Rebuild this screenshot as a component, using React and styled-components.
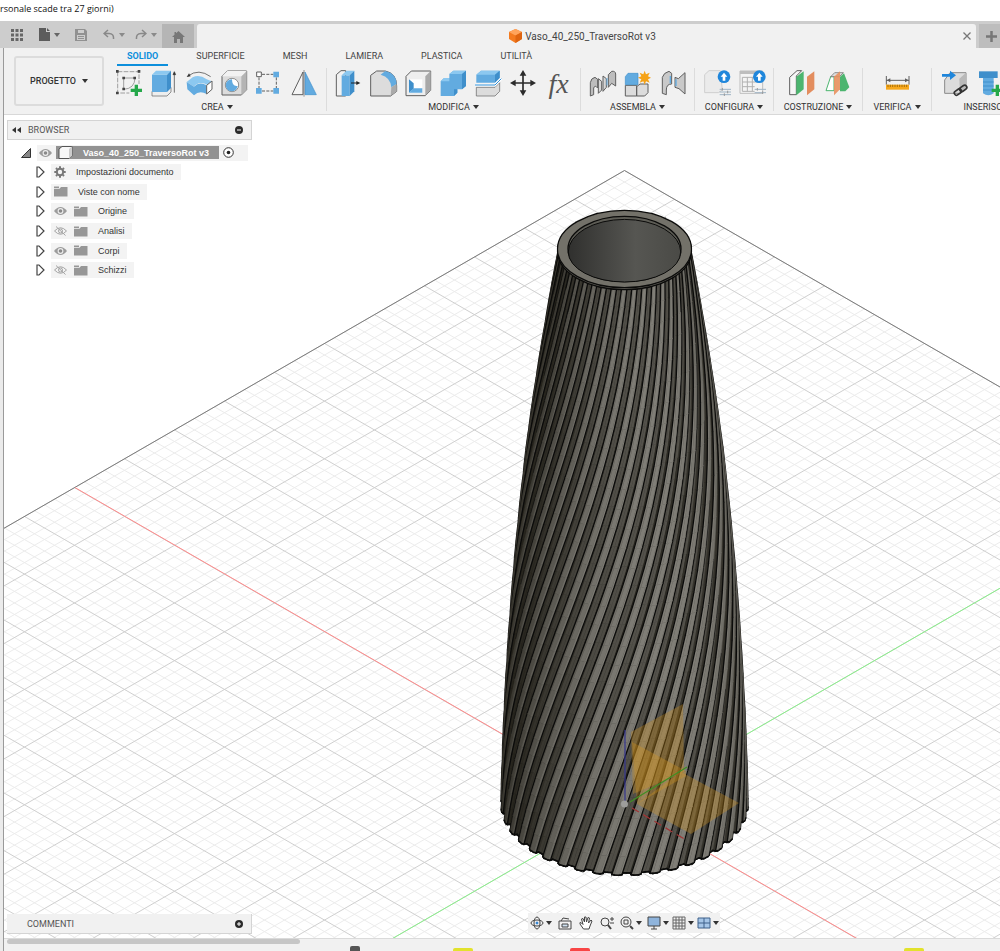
import React from 'react'
import styled, { createGlobalStyle } from 'styled-components'

/* ---------- vase geometry ---------- */

const CX = 624.5
const TOP = 249
const DROP = 555
const RIBS = 40
const PITCH = (Math.PI * 2) / RIBS
const STEPS = 30

const radius = (t) => 64.5 + 98 * t - 43 * t * t
const twist = (t) => -(1.1 * t + 1.2 * t * t - 0.667 * t * t * t)

// [angle offset as share of a pitch, height over the groove]
const PROFILE = [
  [-0.5, 0],
  [-0.3, 0],
  [-0.26, 2.8],
  [-0.13, 4],
  [0.13, 4],
  [0.26, 2.8],
  [0.3, 0],
  [0.5, 0],
]

const point = (rib, p, t) => {
  const [off, h] = PROFILE[p]
  const a = (rib + off) * PITCH + twist(t)
  const r = radius(t) + h * Math.min(1, 0.3 + t * 2)
  return {
    x: CX + r * Math.sin(a),
    y: TOP + DROP * t + r * Math.cos(a) * 0.577,
    d: r * Math.cos(a) * 0.816 + (1 - t) * 680 * 0.577,
    a,
    r,
  }
}

const xy = (q) => `${q.x.toFixed(1)} ${q.y.toFixed(1)}`

const buildVase = () => {
  const parts = []
  const outline = []
  for (let rib = 0; rib < RIBS; rib++) {
    for (let p = 0; p < PROFILE.length - 1; p++) {
      for (let s = 0; s < STEPS; s++) {
        const a = point(rib, p, s / STEPS)
        const b = point(rib, p + 1, s / STEPS)
        const c = point(rib, p + 1, (s + 1) / STEPS)
        const e = point(rib, p, (s + 1) / STEPS)
        const area = (c.x - a.x) * (e.y - b.y) - (c.y - a.y) * (e.x - b.x)
        if (area <= 0) continue
        const mid = (a.a + b.a) / 2
        const tilt = Math.atan2(a.r - b.r, a.r * (b.a - a.a))
        let v = 58 + 70 * Math.max(0, Math.cos(mid + tilt * 0.5 - 0.4))
        if (p === 0 || p === 6) v *= 0.66
        if (p === 1 || p === 5) v *= 0.4
        v = Math.round(v)
        const path = `M${xy(a)}L${xy(b)}L${xy(c)}L${xy(e)}Z`
        const d = a.d + b.d + c.d + e.d
        outline.push(path)
        parts.push({ d, path, fill: `rgb(${v},${v - 2},${v - 9})` })
        if (p === 2) parts.push({ d: d + 6, path: `M${xy(a)}L${xy(e)}`, w: 1.3 })
        if (p === 4) parts.push({ d: d + 6, path: `M${xy(b)}L${xy(c)}`, w: 1.3 })
        if (s === STEPS - 1) parts.push({ d: d + 6, path: `M${xy(c)}L${xy(e)}`, w: 1.6 })
      }
    }
  }
  parts.sort((m, n) => m.d - n.d)
  return { parts, outline: outline.join('') }
}

const VASE = buildVase()

/* ---------- ground grid ---------- */

const SLOPE = 0.5766
const APEX = 170.5

const gridLines = (major) => {
  const out = []
  for (let i = 0; i <= 110; i++) {
    if ((i % 5 === 0) !== major) continue
    const k = i * 10
    const y = APEX + k * SLOPE
    out.push(`M${CX - k} ${y}l1100 ${1100 * SLOPE}`)
    out.push(`M${CX + k} ${y}l-1100 ${1100 * SLOPE}`)
  }
  return out.join('')
}

function Scene() {
  return (
    <Canvas viewBox="4 115 996 823" preserveAspectRatio="xMidYMid slice" aria-hidden="true">
      <defs>
        <linearGradient id="inside" x1="0" x2="1">
          <stop offset="0" stopColor="#30302e" />
          <stop offset=".35" stopColor="#464643" />
          <stop offset=".6" stopColor="#565652" />
          <stop offset="1" stopColor="#4a4a46" />
        </linearGradient>
      </defs>
      <path d={gridLines(false)} stroke="#ececec" fill="none" />
      <path d={gridLines(true)} stroke="#cfcfcf" fill="none" />
      <path d={`M-100 ${APEX + (CX + 100) * SLOPE}L${CX} ${APEX}L1100 ${APEX + (1100 - CX) * SLOPE}`} stroke="#7d7d7d" fill="none" />
      <path d="M75 487.6L1055 1052.7" stroke="#ff8a8a" />
      <path d="M1174.5 487.6L194 1053" stroke="#8af08a" />

      <path d={VASE.outline} stroke="#0c0c0b" strokeWidth="1.6" fill="#222" />
      {VASE.parts.map((q, i) =>
        q.fill ? (
          <path key={i} d={q.path} fill={q.fill} stroke={q.fill} strokeWidth=".4" />
        ) : (
          <path key={i} d={q.path} stroke="#0b0b0a" strokeWidth={q.w} strokeLinecap="round" />
        )
      )}

      <ellipse cx={CX} cy="251" rx="67" ry="38.7" fill="#66645d" stroke="#0b0b0a" strokeWidth="1.2" />
      <ellipse cx={CX} cy="249" rx="67" ry="38.7" fill="#737169" stroke="#0b0b0a" strokeWidth="1.2" />
      <ellipse cx={CX} cy="249" rx="56.5" ry="32.7" fill="#5d5c55" stroke="#0b0b0a" strokeWidth="1.3" />
      <path d="M568.3 252a56.2 32.6 0 0 1 112.4 0a56.2 30 0 0 1-112.4 0z" fill="url(#inside)" stroke="#0b0b0a" />

      <g fill="#d8961c" fillOpacity=".32">
        <path d="M631 732L683 704L684 772L633 794Z" />
        <path d="M632 742L686 771L686 776L637 804Z" />
        <path d="M637 804L681 772L739 803L691 834Z" />
      </g>
      <path d="M625 730V801" stroke="#35358f" strokeWidth="1.2" />
      <path d="M630 802L687 767" stroke="#3f8f24" strokeWidth="1.4" />
      <path d="M632 808L686 840" stroke="#a03434" strokeWidth="1.2" strokeDasharray="8 5" />
      <circle cx="624.5" cy="804" r="3.5" fill="#9d9d9b" />
    </Canvas>
  )
}

/* ---------- tool icons, drawn on an 81 unit box ---------- */

const G = '#5f5f5f'
const B = '#62abe0'
const BL = '#8cc8f0'
const BD = '#3f8fcb'
const L = '#dcdcdc'

const ICONS = {
  sketch: (
    <>
      <path d="M5 5H69V42M5 5V69H40" fill="none" stroke="#777" strokeWidth="2" strokeDasharray="14 4" />
      <path d="M23 24H57Q56 56 23 58Z" fill="none" stroke="#777" strokeWidth="2" />
      <path d="M0 0h8v8H0zM65 0h8v8h-8zM0 65h8v8H0zM19 20h8v8h-8zM52 20h8v8h-8zM19 53h8v8h-8z" fill="#444" />
      <path d="M56 44h10v12h12v10H66v12H56V66H44V56h12z" fill="#25a84a" />
    </>
  ),
  extrude: (
    <>
      <path d="M3 64v14h45l12-12V52z" fill="#eee" stroke={G} strokeWidth="2" />
      <path d="M3 14h45v52H3z" fill={B} />
      <path d="M3 14L15 2h45L48 14z" fill={BL} />
      <path d="M60 2v52L48 66V14z" fill={BD} />
      <path d="M70 68V8M66 14l4-9 4 9z" stroke="#333" strokeWidth="2" fill="#333" />
    </>
  ),
  revolve: (
    <>
      <path d="M6 18Q38-6 74 20" fill="none" stroke="#333" strokeWidth="2" />
      <path d="M2 21L9 10l5 9z" fill="#333" />
      <path d="M2 36L20 22Q40 12 62 28L77 34 66 46Q40 30 24 50z" fill={BL} />
      <path d="M2 36L24 50V76L4 58zM24 50Q40 34 62 46V72Q40 60 24 76z" fill={B} />
      <path d="M62 46L78 33V58L62 72z" fill="#fff" stroke={G} strokeWidth="3" />
    </>
  ),
  hole: (
    <>
      <path d="M3 19L19 3h58v56L61 75H3z" fill={L} stroke={G} strokeWidth="3" />
      <path d="M61 19L77 3v56L61 75z" fill="#b4b4b4" />
      <path d="M3 19L19 3h58L61 19z" fill="#f2f2f2" />
      <circle cx="33" cy="45" r="20" fill="#fff" stroke={G} strokeWidth="2" />
      <path d="M33 28a18 18 0 1 0 17 20q-17 3-17-20z" fill={B} />
    </>
  ),
  pattern: (
    <>
      <path d="M18 13H52M9 22V54M61 22V54M18 63H52" stroke={G} strokeWidth="3" strokeDasharray="9 4" />
      <path d="M2 6h14v14H2z" fill="#fff" stroke={G} strokeWidth="3" />
      <path d="M52 5h17v17H52zM0 54h17v17H0zM52 54h17v17H52z" fill={B} />
    </>
  ),
  mirror: (
    <>
      <path d="M36 6V74H3z" fill="#f4f4f4" stroke={G} strokeWidth="3" />
      <path d="M42 6V74H76z" fill={B} stroke={BD} strokeWidth="2" />
      <path d="M39 0V80" stroke={G} strokeWidth="2" />
    </>
  ),
  press: (
    <>
      <path d="M4 14L18 2h14V78H4z" fill="#f1f1f1" stroke={G} strokeWidth="3" />
      <path d="M20 16h24V78H20z" fill={B} />
      <path d="M20 16L34 2h24L44 16z" fill={BL} />
      <path d="M58 2v62L44 78V16z" fill={BD} />
      <path d="M48 39H66" stroke="#222" strokeWidth="3" />
      <path d="M64 33l12 6-12 6z" fill="#222" />
    </>
  ),
  fillet: (
    <>
      <path d="M2 16L20 3H46Q80 10 80 48V64L62 78H2z" fill={L} stroke={G} strokeWidth="3" />
      <path d="M32 14L46 3Q80 10 80 42L64 52Q62 22 32 14z" fill={B} />
      <path d="M64 52L80 42V64L62 78z" fill="#aaa" />
    </>
  ),
  shell: (
    <>
      <path d="M3 19L19 3h58v58L61 77H3z" fill="#eee" stroke={G} strokeWidth="3" />
      <path d="M61 19L77 3v58L61 77z" fill="#a9a9a9" />
      <path d="M12 28h40v40H12z" fill="#fff" />
      <path d="M12 28L26 40V56L12 68z" fill={BD} />
      <path d="M12 68L26 55H52V68z" fill={B} />
    </>
  ),
  combine: (
    <>
      <path d="M2 34L12 24H28V12L40 2H78V48L66 58H52V68L42 78H2z" fill={B} />
      <path d="M28 12L40 2H78L66 12zM2 34L12 24H28V34z" fill={BL} />
      <path d="M66 12L78 2V48L66 58zM52 58V68L42 78V58z" fill={BD} />
    </>
  ),
  split: (
    <>
      <path d="M4 52H60L74 38V64L60 78H4z" fill={L} stroke={G} strokeWidth="2" />
      <path d="M4 14L18 2H74V24L60 38H4z" fill={B} />
      <path d="M4 14L18 2H74L60 14z" fill={BL} />
      <path d="M60 14L74 2V24L60 38z" fill={BD} />
      <path d="M0 45H60L79 26" stroke="#fff" strokeWidth="8" fill="none" />
      <path d="M0 45H60L79 26" stroke="#2f90d8" strokeWidth="3" fill="none" />
    </>
  ),
  move: (
    <>
      <path d="M39 12V66M12 39H66" stroke="#2b2b2b" strokeWidth="5" />
      <path d="M39 0l10 17H29zM39 78L29 61h20zM0 39l17-10v20zM78 39L61 49V29z" fill="#2b2b2b" />
    </>
  ),
  joint: (
    <>
      <path d="M4 78V38Q6 24 18 22L26 28V54Q18 44 14 54V74z" fill="#bdbdbd" stroke={G} strokeWidth="3" />
      <path d="M28 70V26l10 8V60zM42 64V18l10 8V52z" fill="#d7d7d7" stroke={G} strokeWidth="3" />
      <path d="M58 52V14L68 4Q79 2 80 12V48L68 40z" fill="#bdbdbd" stroke={G} strokeWidth="3" />
      <path d="M54 24V46" stroke={B} strokeWidth="3" />
    </>
  ),
  component: (
    <>
      <path d="M4 46H38V78H4zM38 50L48 42H72V68L62 78H38z" fill={L} stroke={G} strokeWidth="3" />
      <path d="M4 20L12 10H42V44H4z" fill={B} stroke={BD} strokeWidth="2" />
      <path d="M62 2l4 11 11-5-5 11 9 4-9 5 5 10-11-4-4 10-4-10-11 4 5-10-10-5 10-4-5-11 11 5z" fill="#f5a216" />
    </>
  ),
  asbuilt: (
    <>
      <path d="M10 70V22Q14 8 30 4L38 10V42Q22 42 22 60V74z" fill="#c9c9c9" stroke={G} strokeWidth="3" />
      <path d="M48 22L58 26 78 8V72L60 56 48 52z" fill="#c9c9c9" stroke={G} strokeWidth="3" />
      <path d="M34 18V40M51 28V48" stroke={B} strokeWidth="4" />
    </>
  ),
  config: (
    <>
      <path d="M5 14L18 2H52L58 60 46 68H5z" fill="#ebebeb" stroke="#cfcfcf" strokeWidth="3" />
      <path d="M50 58H84M50 66H84M50 74H84" stroke="#9fb4c4" strokeWidth="3" />
      <path d="M58 54v8M74 62v8M64 70v8" stroke="#999" strokeWidth="3" />
      <circle cx="63" cy="20" r="19" fill="#1f86db" />
      <path d="M63 8l10 12h-6v12h-8V20h-6z" fill="#fff" />
    </>
  ),
  table: (
    <>
      <path d="M6 3H74V70H6z" fill="#f4f4f4" stroke="#bdbdbd" strokeWidth="3" />
      <path d="M6 3H74V12H6z" fill="#bdbdbd" />
      <path d="M13 22H66M13 36H66M13 50H50M13 64H50M13 22V64M28 22V64M43 22V64" stroke="#b0b0b0" strokeWidth="3" />
      <path d="M50 58H84M50 68H84" stroke="#9fb4c4" strokeWidth="3" />
      <path d="M58 54v8M74 64v8" stroke="#999" strokeWidth="3" />
      <circle cx="64" cy="20" r="19" fill="#1f86db" />
      <path d="M64 8l10 12h-6v12h-8V20h-6z" fill="#fff" />
    </>
  ),
  offset: (
    <>
      <path d="M8 22L30 2H44L28 18V74H8z" fill="#f6f6f6" stroke={G} strokeWidth="3" />
      <path d="M28 20L50 4V58L28 76z" fill="#4cb56f" />
      <path d="M60 20L82 4V58L60 76z" fill="#e38d5e" />
    </>
  ),
  midplane: (
    <>
      <path d="M12 62L26 20H36V62z" fill="#fff" stroke="#4cb56f" strokeWidth="3" />
      <path d="M26 20L38 8H64L52 20z" fill="#ddd" stroke={G} strokeWidth="2" />
      <path d="M54 20L66 10 82 52 70 64H54z" fill="#4cb56f" />
      <path d="M36 20L54 4V58L36 76z" fill="#e8905e" fillOpacity=".9" />
    </>
  ),
  measure: (
    <>
      <path d="M7 18V44M75 18V44M7 31H75" stroke={G} strokeWidth="3" />
      <path d="M8 31l11-6v12zM74 31l-11-6v12z" fill={G} />
      <path d="M6 44H75V59H6z" fill="#f7a81b" />
      <path d="M12 44v7M19 44v7M26 44v7M33 44v7M40 44v7M47 44v7M54 44v7M61 44v7M68 44v7" stroke="#7d5200" strokeWidth="2" />
    </>
  ),
  insert: (
    <>
      <path d="M14 30L30 8H78V54L62 70H14z" fill={L} stroke="#8a8a8a" strokeWidth="3" />
      <path d="M58 26L78 8V54L60 70z" fill="#b9b9b9" />
      <path d="M6 12H30V2L48 16 30 30V20H6z" fill="#1f86db" />
      <g fill="none" stroke="#333" strokeWidth="5">
        <rect x="42" y="60" width="23" height="13" rx="6" transform="rotate(-35 53 66)" />
        <rect x="58" y="49" width="23" height="13" rx="6" transform="rotate(-35 69 55)" />
      </g>
    </>
  ),
  bolt: (
    <>
      <path d="M12 4H68V24H12z" fill={BD} />
      <path d="M24 24H56V70Q40 82 24 70z" fill={B} />
      <path d="M24 36H56M24 48H56M24 60H56" stroke={BD} strokeWidth="3" />
      <path d="M62 44h10v12h12v10H72v12H62V66H50V56h12z" fill="#25a84a" />
    </>
  ),
}

const GROUPS = [
  { name: 'CREA', w: 219, tools: ['sketch', 'extrude', 'revolve', 'hole', 'pattern', 'mirror'] },
  { name: 'MODIFICA', w: 254, tools: ['press', 'fillet', 'shell', 'combine', 'split', 'move', 'fx'] },
  { name: 'ASSEMBLA', w: 114, tools: ['joint', 'component', 'asbuilt'] },
  { name: 'CONFIGURA', w: 79, tools: ['config', 'table'] },
  { name: 'COSTRUZIONE', w: 89, tools: ['offset', 'midplane'] },
  { name: 'VERIFICA', w: 69, tools: ['measure'] },
  { name: 'INSERISCI', w: 114, tools: ['insert', 'bolt', 'component'] },
]

const TABS = ['SOLIDO', 'SUPERFICIE', 'MESH', 'LAMIERA', 'PLASTICA', 'UTILITÀ']

const ROWS = [
  { label: 'Impostazioni documento', icon: 'gear' },
  { label: 'Viste con nome', icon: 'folder' },
  { label: 'Origine', icon: 'folder', eye: 'on' },
  { label: 'Analisi', icon: 'folder', eye: 'off' },
  { label: 'Corpi', icon: 'folder', eye: 'on' },
  { label: 'Schizzi', icon: 'folder', eye: 'off' },
]

function Eye({ off }) {
  return (
    <svg width="13" height="10" viewBox="0 0 13 10" aria-hidden="true">
      {off ? (
        <g fill="none" stroke="#a3a3a3">
          <path d="M.5 5Q6.500-1.500 12.500 5Q6.500 11.500.5 5zM2 .5L11.500 9.500" />
          <circle cx="6.500" cy="5" r="2" />
        </g>
      ) : (
        <>
          <path d="M0 5Q6.500-3 13 5Q6.500 13 0 5z" fill="#9c9c9c" />
          <circle cx="6.500" cy="5" r="2.900" fill="#eee" />
          <circle cx="6.500" cy="5" r="1.800" fill="#8a8a8a" />
        </>
      )}
    </svg>
  )
}

function Folder() {
  return (
    <svg width="14" height="11" viewBox="0 0 14 11" aria-hidden="true">
      <path d="M0 .5H5V2H0zM0 2.800H5.500L7 1H13.500V10.500H0z" fill="#979797" />
    </svg>
  )
}

function Gear() {
  return (
    <svg width="12" height="12" viewBox="0 0 12 12" aria-hidden="true">
      <circle cx="6" cy="6" r="3.200" fill="none" stroke="#777" strokeWidth="2" />
      <path d="M6 .3V2M6 10v1.700M.3 6H2M10 6h1.700M2 2l1.200 1.200M8.800 8.800L10 10M2 10l1.200-1.200M8.800 3.200L10 2" stroke="#777" strokeWidth="2" />
    </svg>
  )
}

function Expand() {
  return (
    <svg width="9" height="12" viewBox="0 0 9 12" aria-hidden="true">
      <path d="M1 1H3L8 6L3 11H1z" fill="#fff" stroke="#444" strokeWidth="1.200" />
    </svg>
  )
}

const NAV = [
  { name: 'Orbita', arrow: true, w: 26, art: <><ellipse cx="7" cy="7" rx="6" ry="3" /><ellipse cx="7" cy="7" rx="3" ry="6" /><circle cx="7" cy="7" r="1" fill="#2a7fd0" stroke="#2a7fd0" /></> },
  { name: 'Guarda', w: 22, art: <><path d="M1 5H13V13H1zM3 5L5 2L11 3" /><path d="M4 8H10V11H4z" fill="#cfe0ef" /></> },
  { name: 'Pan', w: 20, art: <path fill="#fff" d="M4.500 13L1 8L1 6.500L2.500 7L4 8.500L2.500 3L4 2.500L5.500 6L5.500 1L7 1L7.500 6L9 1.500L10.500 2L9.500 7L12 4L13 5L11 10L10 13z" /> },
  { name: 'Zoom', w: 21, art: <><circle cx="5" cy="6" r="4" /><path d="M8 9L11 13" strokeWidth="2" /><path d="M10 3h4M12 1v4M10 7h4" /></> },
  { name: 'Adatta', arrow: true, w: 28, art: <><circle cx="6" cy="6" r="5" /><path d="M4 4H8V8H4z" /><path d="M10 10L13 13" strokeWidth="2" /></> },
  { name: 'Visualizzazione', arrow: true, w: 25, art: <><path d="M1 1H13V10H1z" fill="#8fb4dc" /><path d="M4 13H10M7 10V13" /></> },
  { name: 'Griglia', arrow: true, w: 25, art: <path stroke="#666" d="M1 1H13V13H1zM4 1V13M7 1V13M10 1V13M1 4H13M1 7H13M1 10H13" /> },
  { name: 'Finestre', arrow: true, w: 25, art: <path d="M1 2H13V12H1zM7 2V12M1 7H13" fill="#a6c6e8" stroke="#3f618a" /> },
]

const MARKS = [
  { gap: 350, w: 10, color: '#555' },
  { gap: 93, w: 20, color: '#e2e22c' },
  { gap: 97, w: 20, color: '#f84545' },
  { gap: 314, w: 20, color: '#e2e22c' },
]

export default function App() {
  return (
    <Page>
      <Global />
      <TitleBar>rsonale scade tra 27 giorni)</TitleBar>
      <TabBar>
        <QuickBar>
          <Quick $w={34} aria-label="Applicazioni">
            <svg width="12" height="12" viewBox="0 0 12 12">
              <path d="M0 0h3v3H0zM4.500 0h3v3h-3zM9 0h3v3H9zM0 4.500h3v3H0zM4.500 4.500h3v3h-3zM9 4.500h3v3H9zM0 9h3v3H0zM4.500 9h3v3h-3zM9 9h3v3H9z" fill="#666" />
            </svg>
          </Quick>
          <Quick $w={30} aria-label="File">
            <svg width="11" height="13" viewBox="0 0 11 13">
              <path d="M0 0H7V4H11V13H0zM8 0L11 3H8z" fill="#5c5c5c" />
            </svg>
            <Caret $c="#666" />
          </Quick>
          <Quick $w={34} aria-label="Salva">
            <svg width="12" height="12" viewBox="0 0 12 12">
              <path d="M0 0H10L12 2V12H0zM3 1V4H9V1zM2 6V11H10V6z" fill="#919191" fillRule="evenodd" />
              <path d="M3 7.500H9M3 9.500H9" stroke="#919191" />
            </svg>
          </Quick>
          <Quick $w={32} aria-label="Annulla">
            <svg width="12" height="11" viewBox="0 0 12 11">
              <path d="M5 1L1 4.500L5 8M1 4.500H6Q11 4.500 10.500 10" fill="none" stroke="#888" strokeWidth="1.500" />
            </svg>
            <Caret $c="#8a8a8a" />
          </Quick>
          <Quick $w={32} aria-label="Ripeti">
            <svg width="12" height="11" viewBox="0 0 12 11">
              <path d="M7 1L11 4.500L7 8M11 4.500H6Q1 4.500 1.500 10" fill="none" stroke="#888" strokeWidth="1.500" />
            </svg>
            <Caret $c="#8a8a8a" />
          </Quick>
        </QuickBar>
        <HomeTab aria-label="Home">
          <svg width="13" height="12" viewBox="0 0 13 12">
            <path d="M6.500 0L13 6H11V12H8V8H5V12H2V6H0L2.500 3.700V1H4V2.300z" fill="#777" />
          </svg>
        </HomeTab>
        <DocTab>
          <svg width="13" height="14" viewBox="0 0 13 14" aria-hidden="true">
            <path d="M6.500 0L13 3V10L6.500 14L0 10V3z" fill="#f47b20" />
            <path d="M6.500 0L13 3L6.500 6.500L0 3z" fill="#ffa45c" />
            <path d="M6.500 6.500L13 3V10L6.500 14z" fill="#de6410" />
          </svg>
          <DocName>Vaso_40_250_TraversoRot v3</DocName>
          <CloseTab aria-label="Chiudi">
            <svg width="8" height="8" viewBox="0 0 8 8">
              <path d="M.5.5L7.500 7.500M7.500.5L.5 7.500" stroke="#777" strokeWidth="1.300" />
            </svg>
          </CloseTab>
        </DocTab>
        <NewTab aria-label="Nuova scheda">
          <svg width="11" height="11" viewBox="0 0 11 11">
            <path d="M5.500 0V11M0 5.500H11" stroke="#777" strokeWidth="2.500" />
          </svg>
        </NewTab>
      </TabBar>

      <Frame>
        <Toolbar>
          <Workspace>
            PROGETTO <Caret $c="#333" />
          </Workspace>
          <Ribbon>
            <RibbonTabs>
              {TABS.map((t, i) => (
                <RibbonTab key={t} $on={i === 0}>{t}</RibbonTab>
              ))}
            </RibbonTabs>
            <Groups>
              {GROUPS.map((g) => (
                <Group key={g.name} $w={g.w}>
                  <Tools>
                    {g.tools.map((t) => (
                      <Tool key={t} aria-label={t}>
                        {t === 'fx' ? (
                          <Fx>fx</Fx>
                        ) : (
                          <svg width="27" height="27" viewBox="0 0 81 81" overflow="visible">{ICONS[t]}</svg>
                        )}
                      </Tool>
                    ))}
                  </Tools>
                  <GroupName>
                    {g.name} <Caret $c="#333" />
                  </GroupName>
                </Group>
              ))}
            </Groups>
          </Ribbon>
        </Toolbar>

        <Viewport>
          <Scene />
          <Browser>
            <PanelHead>
              <svg width="9" height="6" viewBox="0 0 9 6" aria-hidden="true">
                <path d="M4 0V6L0 3zM9 0V6L5 3z" fill="#333" />
              </svg>
              <PanelTitle>BROWSER</PanelTitle>
              <RoundButton aria-label="Comprimi">
                <svg width="8" height="8" viewBox="0 0 8 8">
                  <circle cx="4" cy="4" r="4" fill="#2b2b2b" />
                  <path d="M2 4H6" stroke="#fff" />
                </svg>
              </RoundButton>
            </PanelHead>
            <Tree>
              <Row $indent={14}>
                <svg width="10" height="10" viewBox="0 0 10 10" aria-hidden="true">
                  <path d="M9.500.5V9.500H.5z" fill="#888" stroke="#333" />
                </svg>
                <RootItem>
                  <Eye />
                  <RootName>
                    <svg width="15" height="13" viewBox="0 0 15 13" aria-hidden="true">
                      <path d="M1 3L4 .5H14V9.500L11 12.500H1z" fill="#f8f8f8" stroke="#555" />
                      <path d="M11 3L14 .5V9.500L11 12.500z" fill="#ccc" />
                    </svg>
                    <b>Vaso_40_250_TraversoRot v3</b>
                  </RootName>
                  <svg width="11" height="11" viewBox="0 0 11 11" aria-hidden="true">
                    <circle cx="5.500" cy="5.500" r="4.800" fill="#fff" stroke="#333" />
                    <circle cx="5.500" cy="5.500" r="1.800" fill="#222" />
                  </svg>
                </RootItem>
              </Row>
              {ROWS.map((r) => (
                <Row key={r.label} $indent={29}>
                  <Expand />
                  <Item>
                    {r.eye && <Eye off={r.eye === 'off'} />}
                    {r.icon === 'gear' ? <Gear /> : <Folder />}
                    <ItemName>{r.label}</ItemName>
                  </Item>
                </Row>
              ))}
            </Tree>
          </Browser>

          <Comments>
            <PanelTitle $inset>COMMENTI</PanelTitle>
            <RoundButton aria-label="Espandi">
              <svg width="8" height="8" viewBox="0 0 8 8">
                <circle cx="4" cy="4" r="4" fill="#2b2b2b" />
                <path d="M2 4H6M4 2V6" stroke="#fff" />
              </svg>
            </RoundButton>
          </Comments>

          <NavBar>
            {NAV.map((n) => (
              <NavButton key={n.name} aria-label={n.name} $w={n.w}>
                <svg width="14" height="14" viewBox="0 0 14 14" fill="none" stroke="#444">{n.art}</svg>
                {n.arrow && <Caret $c="#333" />}
              </NavButton>
            ))}
          </NavBar>
        </Viewport>

        <Timeline>
          <ScrollThumb />
          <Marks>
            {MARKS.map((m, i) => (
              <Mark key={i} $gap={m.gap} $w={m.w} $color={m.color} />
            ))}
          </Marks>
        </Timeline>
      </Frame>
    </Page>
  )
}

const Global = createGlobalStyle`
  *{
    box-sizing:border-box;
  }
  body{
    margin:0;
    background:#fff;
  }
  button{
    border:none;
    background:none;
    padding:0;
    font:inherit;
    color:inherit;
    cursor:pointer;
  }
  svg{
    display:block;
    flex:none;
  }
`
const Page = styled.div`
  display:flex;
  flex-direction:column;
  min-height:100vh;
  overflow:hidden;
  font-family:Roboto, "Liberation Sans", sans-serif;
  font-size:9px;
  color:#444;
`
const TitleBar = styled.div`
  height:21px;
  line-height:18px;
  font-family:"Open Sans", "Noto Sans", sans-serif;
  color:#111;
  white-space:nowrap;
`
const TabBar = styled.div`
  display:flex;
  height:27px;
  padding-top:3px;
  background:#cdcdcd;
`
const QuickBar = styled.div`
  display:flex;
  align-items:center;
  width:162px;
  padding:0 0 3px 0;
`
const Quick = styled.button`
  display:flex;
  align-items:center;
  justify-content:center;
  gap:4px;
  width:${(p) => p.$w}px;
  height:20px;
`
const Caret = styled.i`
  flex:none;
  border:3px solid transparent;
  border-top:4px solid ${(p) => p.$c};
  border-bottom:0;
`
const HomeTab = styled.button`
  display:flex;
  align-items:center;
  justify-content:center;
  width:32px;
  margin-right:3px;
  padding-top:2px;
  background:#b5b5b5;
`
const DocTab = styled.div`
  flex:1;
  display:flex;
  align-items:center;
  justify-content:center;
  gap:3px;
  position:relative;
  padding-right:8px;
  background:#f1f1f1;
  border-radius:3px 3px 0 0;
`
const DocName = styled.span`
  font-size:10px;
`
const CloseTab = styled.button`
  position:absolute;
  right:5px;
`
const NewTab = styled.button`
  display:flex;
  align-items:center;
  justify-content:center;
  width:21px;
  margin-left:3px;
  padding-left:3px;
  background:#bdbdbd;
`
const Frame = styled.div`
  flex:1;
  display:flex;
  flex-direction:column;
  margin-left:3px;
  border-left:1px solid #9a9a9a;
  box-shadow:-3px 0 0 #ebebeb;
`
const Toolbar = styled.div`
  display:flex;
  height:67px;
  padding-left:10px;
  background:#f1f1f1;
  border-bottom:1px solid #d8d8d8;
  overflow:hidden;
`
const Workspace = styled.button`
  display:flex;
  flex:none;
  align-items:center;
  justify-content:center;
  gap:6px;
  width:90px;
  height:50px;
  margin-top:8px;
  border:2px solid #dcdcdc;
  border-radius:3px;
  font-weight:500;
  color:#333;
`
const Ribbon = styled.div`
  display:flex;
  flex-direction:column;
  margin-left:4px;
`
const RibbonTabs = styled.div`
  display:flex;
  gap:18px;
  height:18px;
  margin-left:9px;
`
const RibbonTab = styled.button`
  padding:0 10px;
  line-height:17px;
  border-bottom:2px solid ${(p) => (p.$on ? '#0d8fdc' : 'transparent')};
  font-weight:${(p) => (p.$on ? 700 : 400)};
  color:${(p) => (p.$on ? '#0d8fdc' : '#444')};
`
const Groups = styled.div`
  display:flex;
  padding-top:2px;
`
const Group = styled.div`
  display:flex;
  flex:none;
  flex-direction:column;
  align-items:center;
  width:${(p) => p.$w}px;
  height:43px;
  padding-top:2px;
  border-right:1px solid #dcdcdc;
`
const Tools = styled.div`
  display:flex;
  gap:8px;
`
const Tool = styled.button`
  width:27px;
  height:27px;
`
const Fx = styled.span`
  display:block;
  font:italic 28px/24px "Liberation Serif", serif;
  color:#555;
`
const GroupName = styled.button`
  display:flex;
  flex:none;
  align-items:center;
  gap:3px;
  height:12px;
  margin-top:4px;
  white-space:nowrap;
  color:#333;
`
const Viewport = styled.main`
  flex:1;
  position:relative;
  min-height:400px;
  background:#fff;
  overflow:hidden;
`
const Canvas = styled.svg`
  position:absolute;
  inset:0;
  width:100%;
  height:100%;
`
const Browser = styled.section`
  position:absolute;
  left:3px;
  top:5px;
  width:245px;
`
const PanelHead = styled.div`
  display:flex;
  align-items:center;
  height:20px;
  padding:0 8px 0 4px;
  background:#f1f1f1;
  border:1px solid #d4d4d4;
`
const PanelTitle = styled.span`
  flex:1;
  margin-left:${(p) => (p.$inset ? 15 : 7)}px;
  color:#555;
`
const RoundButton = styled.button`
  width:8px;
  height:8px;
`
const Tree = styled.div`
  display:grid;
  grid-auto-rows:1fr;
  height:137px;
  margin-top:3px;
  font-family:"Liberation Sans", Arial, sans-serif;
  color:#333;
`
const Row = styled.div`
  display:flex;
  align-items:center;
  gap:6px;
  padding-left:${(p) => p.$indent}px;
`
const Item = styled.div`
  display:flex;
  align-items:center;
  gap:7px;
  height:16px;
  padding:0 7px 0 3px;
  background:#f3f3f3;
`
const RootItem = styled(Item)`
  gap:4px;
  padding:0 14px 0 2px;
`
const ItemName = styled.span`
  margin-left:3px;
  white-space:nowrap;
`
const RootName = styled.div`
  display:flex;
  align-items:center;
  gap:10px;
  height:13px;
  padding:0 10px 0 2px;
  background:#929292;
  color:#fff;
  white-space:nowrap;
`
const Comments = styled.section`
  position:absolute;
  left:3px;
  bottom:4px;
  display:flex;
  align-items:center;
  width:245px;
  height:20px;
  padding:0 8px 0 5px;
  background:#f1f1f1;
  border-right:1px solid #d4d4d4;
  border-bottom:1px solid #d4d4d4;
`
const NavBar = styled.div`
  position:absolute;
  left:50%;
  bottom:5px;
  display:flex;
  align-items:center;
  height:20px;
  margin-left:26px;
  background:#f1f1f1;
`
const NavButton = styled.button`
  display:flex;
  align-items:center;
  justify-content:center;
  gap:2px;
  width:${(p) => p.$w}px;
  height:20px;
`
const Timeline = styled.footer`
  height:13px;
  display:flex;
  flex-direction:column;
  justify-content:space-between;
  padding-left:3px;
  background:#f1f1f1;
  border-top:1px solid #dadada;
`
const ScrollThumb = styled.div`
  width:293px;
  height:5px;
  border-radius:3px;
  background:#c6c6c6;
`
const Marks = styled.div`
  display:flex;
  align-items:flex-end;
  margin-left:-7px;
`
const Mark = styled.span`
  flex:none;
  width:${(p) => p.$w}px;
  height:${(p) => (p.$w < 20 ? 5 : 3)}px;
  margin-left:${(p) => p.$gap}px;
  border-radius:2px 2px 0 0;
  background:${(p) => p.$color};
`
